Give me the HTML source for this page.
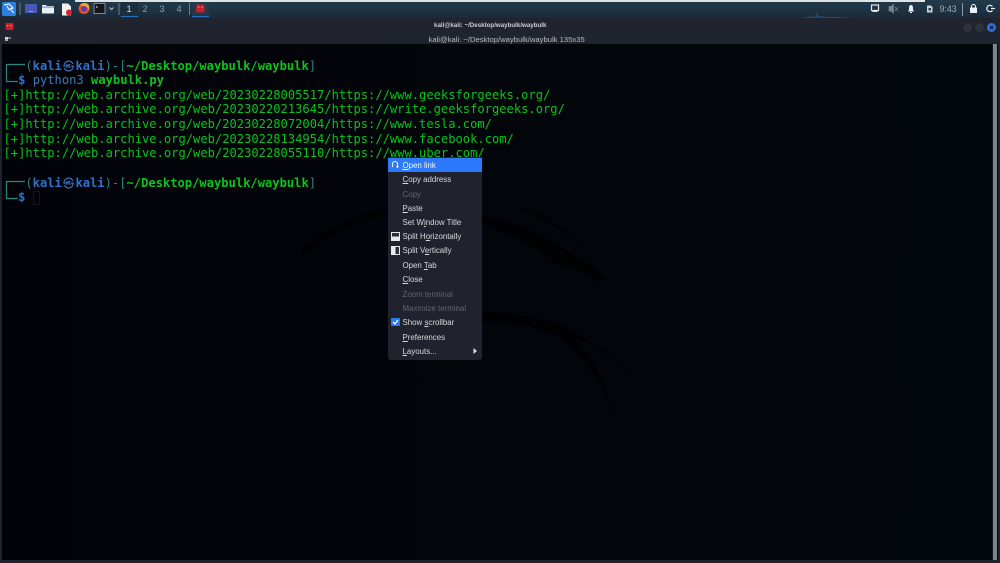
<!DOCTYPE html>
<html>
<head>
<meta charset="utf-8">
<style>
html,body{margin:0;padding:0;width:1000px;height:563px;overflow:hidden;background:#02050a}
*{box-sizing:border-box}
.a{position:absolute}
#panel{left:0;top:0;width:1000px;height:18px;background:linear-gradient(#223a4b,#1e3344 60%,#1b2936)}
#wl{left:75px;top:0;width:850px;height:2px;background:#dfe3e6}
#title{left:0;top:18px;width:1000px;height:26px;background:#20242e}
#term{left:2px;top:44px;width:996px;height:516px;background:linear-gradient(90deg,#020309,#02050a 50%,#02070b)}
.ln{position:absolute;left:3.5px;font:12.11px/15px "DejaVu Sans Mono","Liberation Mono",monospace;white-space:pre;color:#07c418;height:15px}
.b{color:#2f72cc;font-weight:bold}
.t{color:#2c8680}
.g{color:#0cc41a;font-weight:bold}
.c{color:#3a78cc;display:inline-block;width:13.6px;text-align:center;font-size:11px}
.m{position:absolute;left:402.5px;font:7.9px/14px "Liberation Sans",sans-serif;color:#d6d8dc;white-space:pre;height:14px;margin-top:.8px}
.m u{text-decoration-thickness:.6px;text-underline-offset:1px}
.d{color:#62656c}
.wk{position:absolute;top:2px;font:9.2px/15px "Liberation Sans",sans-serif;color:#8f9ba4;width:10px;text-align:center}
.dot{position:absolute;top:22.5px;width:9px;height:9px;border-radius:50%;background:#2d323d}
</style>
</head>
<body>
<div class="a" id="panel"></div>
<div class="a" id="wl"></div>

<!-- panel left -->
<svg class="a" style="left:0;top:0" width="240" height="18" viewBox="0 0 240 18">
  <rect x="2" y="2" width="14" height="14" rx="1.500" fill="#2b7fe0"/>
  <path d="M4 5 L9 4 L13 8 L10 9 L14 13 M7 6 L9 10" fill="none" stroke="#e6f0fb" stroke-width="1.200"/>
  <rect x="19.500" y="3" width="1" height="12" fill="#6f7f8b"/>
  <rect x="25" y="4" width="12" height="9" fill="#4a56b8"/><rect x="29" y="11" width="4" height="1" fill="#9aa3e0"/>
  <path d="M42 5 h4 l1 1 h7 v7.500 h-12z" fill="#e9eef2"/><rect x="42" y="6.500" width="12" height="1.200" fill="#6f9fc0"/>
  <path d="M62 3.500 h6 l3 3 v9 h-9z" fill="#f1f1f1"/><circle cx="69" cy="12.500" r="3" fill="#d8232a"/>
  <circle cx="84" cy="8.500" r="5.500" fill="#e8541f"/><circle cx="84" cy="9" r="3" fill="#5a3fb0"/><path d="M80 5 Q84 1.500 88 4 Q90 7 89 10 Q87 6 84 6 Q81 6 80 5z" fill="#f7a823"/>
  <rect x="94" y="3.500" width="11" height="10" fill="#14161a" stroke="#9aa0a6" stroke-width=".8"/><path d="M96 6 l1.500 1 -1.500 1" stroke="#ddd" stroke-width=".6" fill="none"/>
  <path d="M109.500 7.500 l2 2 2 -2" stroke="#b8c0c6" stroke-width="1" fill="none"/>
  <rect x="118.500" y="3" width="1" height="12" fill="#6f7f8b"/>
  <rect x="121" y="2" width="17" height="16" fill="#1a2e3d"/><rect x="121" y="16" width="17" height="1" fill="#2a6fc0"/>
  <rect x="189" y="3" width="1" height="12" fill="#6f7f8b"/>
  <rect x="192" y="2" width="17" height="16" fill="#233949"/><rect x="192" y="16" width="17" height="1" fill="#2a6fc0"/>
  <rect x="196" y="4.500" width="8.500" height="8" rx="1" fill="#c4202a"/><rect x="198" y="6.500" width="1.200" height="1.200" fill="#f3b0b0"/><rect x="201.500" y="6.500" width="1.200" height="1.200" fill="#f3b0b0"/>
</svg>
<div class="wk" style="left:124px;color:#d4dadf">1</div>
<div class="wk" style="left:140px">2</div>
<div class="wk" style="left:157px">3</div>
<div class="wk" style="left:174px">4</div>

<!-- panel right -->
<svg class="a" style="left:860px;top:0" width="140" height="18" viewBox="0 0 140 18">
  <rect x="11.500" y="5" width="7" height="5.500" fill="none" stroke="#e4e8ea" stroke-width="1.200"/><rect x="12.500" y="11" width="5" height="1" fill="#e4e8ea"/>
  <path d="M29 6.500 h2 l2.500 -2 v8.500 l-2.500 -2 h-2z M35 7 l3 4 M38 7 l-3 4" fill="#77858f" stroke="#77858f" stroke-width=".7"/>
  <path d="M48 11.500 q1 -1 1 -3.500 q0 -3 2 -3 q2 0 2 3 q0 2.500 1 3.500z" fill="#eceff1"/><rect x="50" y="12" width="2" height="1" fill="#eceff1"/>
  <path d="M67 5.500 h4 l1.500 1.500 v5.500 h-5.500z" fill="#cfd4d8"/><path d="M68.500 8 h2.500 v2.500 h-2.500z" fill="#2b3a45"/>
  <rect x="102" y="3" width="1" height="13" fill="#8e9aa3"/>
  <rect x="110" y="7.500" width="7" height="5.500" fill="#eef0f2"/><path d="M111.500 7.500 v-1 a2 2 0 0 1 4 0 v1" stroke="#eef0f2" fill="none" stroke-width="1"/>
  <path d="M132.500 6.500 a3.200 3.200 0 1 0 0 4" stroke="#eef0f2" fill="none" stroke-width="1.200"/><path d="M131 8.500 h4" stroke="#eef0f2" stroke-width="1.200"/>
</svg>
<div class="a" style="left:939.500px;top:2px;font:8.800px/15px 'Liberation Sans',sans-serif;color:#a0abb3">9:43</div>
<svg class="a" style="left:800px;top:11px" width="60" height="7"><path d="M0 7 L8 6 L12 5 L15 6 L17 1 L18 5 L28 6 L40 6 L55 7z" fill="#2a5f8d" opacity=".6"/></svg>

<!-- title bar -->
<div class="a" id="title"></div>
<div class="a" style="left:434px;top:21px;font:bold 6.200px/10px 'Liberation Sans',sans-serif;color:#c9ccd2;white-space:pre">kali@kali: ~/Desktop/waybulk/waybulk</div>
<div class="a" style="left:428.500px;top:34px;font:7.650px/11px 'Liberation Sans',sans-serif;color:#b6b9c0;white-space:pre">kali@kali: ~/Desktop/waybulk/waybulk 135x35</div>
<svg class="a" style="left:4px;top:22px" width="12" height="22" viewBox="0 0 12 22">
  <rect x="1.500" y="1" width="8" height="7" rx="1" fill="#c4202a"/><rect x="3" y="3" width="1.200" height="1.200" fill="#f2b0b0"/><rect x="6.500" y="3" width="1.200" height="1.200" fill="#f2b0b0"/>
  <rect x="1" y="15" width="3" height="2" fill="#d8d8d8"/><rect x="4" y="15" width="3" height="2" fill="#777"/><rect x="1" y="17" width="3" height="2" fill="#aaa"/>
</svg>
<div class="dot" style="left:962.500px"></div>
<div class="dot" style="left:975px"></div>
<div class="dot" style="left:987px;background:#2a6fe0"></div>
<svg class="a" style="left:987px;top:22.500px" width="9" height="9"><path d="M3 3 L6 6 M6 3 L3 6" stroke="#0d1830" stroke-width="1.200"/></svg>

<!-- terminal -->
<div class="a" id="term"></div>
<svg class="a" style="left:0;top:44px" width="1000" height="516" viewBox="0 44 1000 516">
  <g fill="#000102" opacity=".8">
    <path d="M300 250 Q340 215 395 208 L395 213 Q345 222 302 256z"/>
    <path d="M482 216 Q530 226 560 247 Q590 262 606 277 L598 282 Q580 270 565 262 L562 268 Q530 240 482 224z"/>
    <path d="M520 207 Q560 220 584 250 Q566 230 520 209z"/>
    <path d="M482 312 Q540 312 580 335 Q620 360 636 384 Q610 350 570 335 Q600 360 618 425 Q600 370 560 338 Q530 322 482 322z"/>
  </g>
  <rect x="0" y="44" width="2" height="516" fill="#20242e"/>
  <rect x="998" y="44" width="2" height="516" fill="#20242e"/>
  <rect x="992" y="44" width="1" height="516" fill="#14161c"/>
  <rect x="993" y="44" width="4" height="516" fill="#7d828b"/>
</svg>
<div class="a" style="left:0;top:560px;width:1000px;height:3px;background:#20242e"></div>

<!-- corners for prompts -->
<svg class="a" style="left:0;top:60px" width="30" height="145" viewBox="0 0 30 145">
  <path d="M6.500 22 V4.500 H25 M6 21.500 H18" stroke="#2c8680" stroke-width="1.200" fill="none"/>
  <path d="M6.500 139 V121.500 H25 M6 138.500 H18" stroke="#2c8680" stroke-width="1.200" fill="none"/>
</svg>

<div class="ln" style="top:58.500px"><span style="color:transparent">   </span><span class="t">(</span><span class="b">kali</span><span class="c">㉿</span><span class="b">kali</span><span class="t">)-[</span><span class="g">~/Desktop/waybulk/waybulk</span><span class="t">]</span></div>
<div class="ln" style="top:73px"><span style="color:transparent">  </span><span class="b">$</span> <span style="color:#3a7ab8">python3</span> <span class="g">waybulk.py</span></div>
<div class="ln" style="top:87.700px">[+]http://web.archive.org/web/20230228005517/https://www.geeksforgeeks.org/</div>
<div class="ln" style="top:102.300px">[+]http://web.archive.org/web/20230220213645/https://write.geeksforgeeks.org/</div>
<div class="ln" style="top:117px">[+]http://web.archive.org/web/20230228072004/https://www.tesla.com/</div>
<div class="ln" style="top:131.600px">[+]http://web.archive.org/web/20230228134954/https://www.facebook.com/</div>
<div class="ln" style="top:146.200px">[+]http://web.archive.org/web/20230228055110/https://www.uber.com/</div>
<div class="ln" style="top:175.500px"><span style="color:transparent">   </span><span class="t">(</span><span class="b">kali</span><span class="c">㉿</span><span class="b">kali</span><span class="t">)-[</span><span class="g">~/Desktop/waybulk/waybulk</span><span class="t">]</span></div>
<div class="ln" style="top:190px"><span style="color:transparent">  </span><span class="b">$</span></div>
<div class="a" style="left:33px;top:191px;width:7px;height:14px;border:1px solid #0b1a18"></div>

<!-- context menu -->
<div class="a" style="left:387.500px;top:157px;width:94.500px;height:203px;background:#20232d;border-radius:0 0 3px 3px"></div>
<div class="a" style="left:388px;top:158px;width:93.500px;height:14px;background:#2d79fb"></div>
<svg class="a" style="left:391px;top:160px" width="9" height="10" viewBox="0 0 9 10"><path d="M1.500 7 V4 a2.500 2.500 0 0 1 5 0 V7" stroke="#eef3ff" stroke-width="1.100" fill="none"/><path d="M5 6 h3 l-1.500 2.500z" fill="#eef3ff"/></svg>
<div class="m" style="top:158px;color:#f2f5fb"><u>O</u>pen link</div>
<div class="m" style="top:172.300px"><u>C</u>opy address</div>
<div class="m d" style="top:186.800px">Copy</div>
<div class="m" style="top:201px"><u>P</u>aste</div>
<div class="m" style="top:215.400px">Set W<u>i</u>ndow Title</div>
<div class="m" style="top:229.600px">Split H<u>o</u>rizontally</div>
<div class="m" style="top:243.700px">Split V<u>e</u>rtically</div>
<div class="m" style="top:258px">Open <u>T</u>ab</div>
<div class="m" style="top:272.300px"><u>C</u>lose</div>
<div class="m d" style="top:286.900px">Zoom terminal</div>
<div class="m d" style="top:301.100px">Maximize terminal</div>
<div class="m" style="top:315.500px">Show <u>s</u>crollbar</div>
<div class="m" style="top:329.800px"><u>P</u>references</div>
<div class="m" style="top:344px"><u>L</u>ayouts...</div>
<svg class="a" style="left:391px;top:232px" width="10" height="101" viewBox="0 0 10 101">
  <rect x="0" y="0" width="9" height="9" fill="#e8e9eb"/><rect x="1" y="1" width="7" height="3.500" fill="#2a2d35"/>
  <rect x="0" y="14" width="9" height="9" fill="#e8e9eb"/><rect x="4.500" y="15" width="3.500" height="7" fill="#2a2d35"/>
  <rect x="0" y="86" width="9" height="8" rx="1" fill="#2a76f5"/><path d="M2 90 l2 2 3 -4" stroke="#fff" stroke-width="1.300" fill="none"/>
</svg>
<svg class="a" style="left:472px;top:347px" width="6" height="8"><path d="M1.500 1 L5 4 L1.500 7z" fill="#dcdde0"/></svg>
</body>
</html>
